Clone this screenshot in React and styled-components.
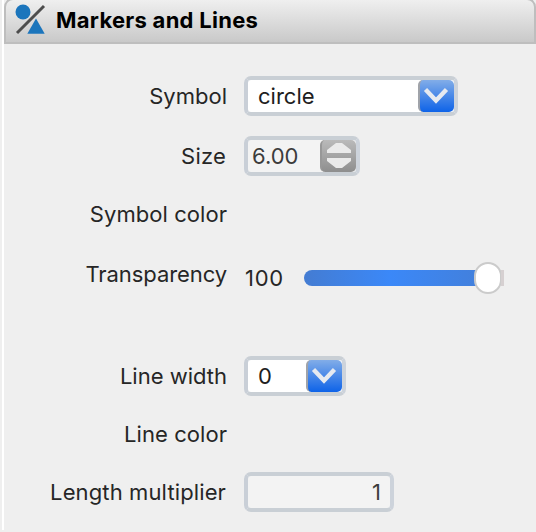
import React from "react";
import styled, { createGlobalStyle } from "styled-components";

const GlobalStyle = createGlobalStyle`
  * { box-sizing: border-box; }
  body { margin: 0; background: #efefef; overflow: hidden; }
`;

const Panel = styled.main`
  width: 536px;
  height: 532px;
  overflow: hidden;
  padding-left: 2px;
  background: #efefef;
  color: #262626;
  font: 400 22px/40px Inter, sans-serif;
`;

const Body = styled.div`
  height: 532px;
  border-left: 2px solid #fff;
`;

const Header = styled.header`
  display: flex;
  align-items: center;
  height: 46px;
  margin-top: -2px;
  border: 2px solid #bebebe;
  border-radius: 9px 9px 0 0;
  background: linear-gradient(#efefef, #c9c9c9);
  padding: 0 0 2px 9px;
`;

const HeaderIcon = styled.svg`
  width: 32px;
  height: 34px;
  flex: none;
`;

const Title = styled.h1`
  margin: 0 0 0 9px;
  color: #000;
  font: 700 22px/40px Inter, sans-serif;
  letter-spacing: 0.27px;
`;

const Row = styled.div`
  display: flex;
  height: 40px;
  margin-top: ${(p) => p.$gap}px;
`;

const Label = styled.label`
  width: ${(p) => p.$width || 223}px;
  margin-right: ${(p) => 240 - (p.$width || 223)}px;
  text-align: right;
  white-space: nowrap;
  letter-spacing: ${(p) => p.$spacing || 0}px;
`;

const Field = styled.div`
  display: flex;
  justify-content: space-between;
  width: ${(p) => p.$width}px;
  height: 40px;
  border: 4px solid;
  border-color: #c9cfd5 #cdd3db #c9cfd5 #c9cfd7;
  border-radius: 7px;
  background: ${(p) => (p.$muted ? "#f3f3f3" : "#fff")};
  color: ${(p) => (p.$muted ? "#3c3c3c" : "#202020")};
  line-height: 32px;
`;

const FieldText = styled.span`
  padding: 0 9px 0 ${(p) => p.$inset}px;
  margin-left: ${(p) => (p.$end ? "auto" : 0)};
`;

const Button = styled.button`
  width: 36px;
  height: 32px;
  padding: 0;
  border: 0;
  border-left: 2px solid ${(p) => (p.$gray ? "#989898" : "#a0a3a9")};
  border-radius: 5px;
  background: ${(p) =>
    p.$gray ? "linear-gradient(#bababa, #8e8e8e)" : "linear-gradient(#82ade8, #0e63e8)"};
  svg { display: block; width: 34px; height: 32px; }
`;

const SliderValue = styled.span`
  width: 60px;
  padding: 4px 0 0 1px;
  letter-spacing: 0.7px;
`;

const Slider = styled.div`
  display: flex;
  align-items: center;
  width: 200px;
  height: 32px;
  margin-top: 8px;
`;

const Fill = styled.div`
  flex: 1;
  height: 16px;
  border-radius: 8px 0 0 8px;
  background: linear-gradient(90deg, #447cd2, #3b88f8 50%, #4280dd);
`;

const Thumb = styled.div`
  width: 28px;
  height: 32px;
  margin-left: -2px;
  border: 2px solid #cbcbcb;
  border-radius: 14px;
  background: #fff;
`;

const Rest = styled.div`
  width: 3px;
  height: 16px;
  margin-left: -1px;
  background: #d6d0d1;
`;

function DropButton() {
  return (
    <Button aria-label="Open list">
      <svg viewBox="0 0 34 32">
        <path d="M5.5 9.5L16 20.5L26.5 9.5" fill="none" stroke="#e6eaf0" strokeWidth="4.4" />
      </svg>
    </Button>
  );
}

function StepButton() {
  return (
    <Button $gray aria-label="Step value">
      <svg viewBox="0 0 34 32">
        <path d="M5 13V10L14 3H20L29 10V13ZM5 18H29V21L20 28H14L5 21Z" fill="#eaeaea" />
      </svg>
    </Button>
  );
}

export default function App() {
  return (
    <>
      <GlobalStyle />
      <Panel>
        <Body>
          <Header>
            <HeaderIcon viewBox="15 2 32 34">
              <path d="M17 32L44 5" stroke="#4d4d4d" strokeWidth="3" />
              <circle cx="23" cy="11" r="7.5" fill="#1b75bc" />
              <path d="M36 17.5L44.7 32.7H27.3Z" fill="#1b75bc" />
            </HeaderIcon>
            <Title>Markers and Lines</Title>
          </Header>
          <Row $gap={32}>
            <Label>Symbol</Label>
            <Field $width={214}>
              <FieldText $inset={10}>circle</FieldText>
              <DropButton />
            </Field>
          </Row>
          <Row $gap={20}>
            <Label $width={222} $spacing={0.2}>Size</Label>
            <Field $width={116} $muted>
              <FieldText $inset={4}>6.00</FieldText>
              <StepButton />
            </Field>
          </Row>
          <Row $gap={18}><Label $spacing={0.06}>Symbol color</Label></Row>
          <Row $gap={20}>
            <Label $spacing={-0.08}>Transparency</Label>
            <SliderValue>100</SliderValue>
            <Slider><Fill /><Thumb /><Rest /></Slider>
          </Row>
          <Row $gap={62}>
            <Label>Line width</Label>
            <Field $width={102}>
              <FieldText $inset={10}>0</FieldText>
              <DropButton />
            </Field>
          </Row>
          <Row $gap={18}><Label $spacing={0.06}>Line color</Label></Row>
          <Row $gap={18}>
            <Label $width={222} $spacing={0.12}>Length multiplier</Label>
            <Field $width={150} $muted>
              <FieldText $end $inset={0}>1</FieldText>
            </Field>
          </Row>
        </Body>
      </Panel>
    </>
  );
}
